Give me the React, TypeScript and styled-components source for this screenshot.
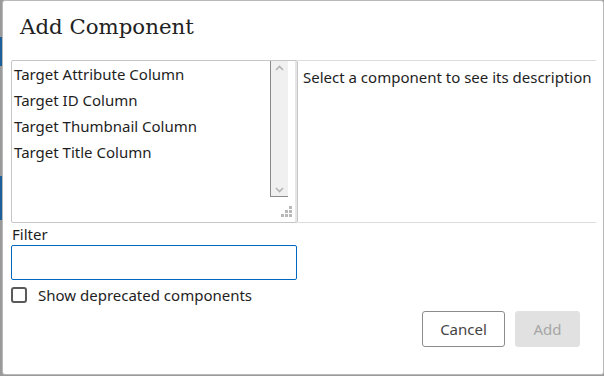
import React, { useState } from 'react';
import styled, { createGlobalStyle } from 'styled-components';

const uiFont = `'Noto Sans', 'Open Sans', Arial, sans-serif`;

const GlobalStyle = createGlobalStyle`
  html, body {
    margin: 0;
    padding: 0;
    width: 604px;
    height: 376px;
    overflow: hidden;
  }
  body {
    font-family: ${uiFont};
    background: #ffffff;
  }
`;

const Backdrop = styled.div`
  display: flex;
  width: 604px;
  height: 376px;
  box-sizing: border-box;
  padding-left: 2px;
  background: linear-gradient(
    to bottom,
    #9a9a9a 0,
    #9a9a9a 37px,
    #1d5f99 37px,
    #1d5f99 66px,
    #9a9a9a 66px,
    #9a9a9a 176px,
    #1d5f99 176px,
    #1d5f99 220px,
    #9a9a9a 220px
  );
`;

const Dialog = styled.div`
  display: flex;
  flex-direction: column;
  flex: 1;
  height: 375px;
  box-sizing: border-box;
  background: #ffffff;
  border: 1px solid #b9b9b9;
  border-radius: 3px;
`;

const Title = styled.h1`
  margin: 0;
  padding: 11px 0 0 17px;
  height: 59px;
  box-sizing: border-box;
  font-family: 'DejaVu Serif', 'Liberation Serif', serif;
  font-weight: 400;
  font-size: 21.3px;
  line-height: 30px;
  color: #222222;
`;

const Body = styled.div`
  display: flex;
  height: 163px;
  margin: 0 7px 0 8px;
`;

const ListBox = styled.div`
  display: flex;
  width: 287px;
  box-sizing: border-box;
  border: 1px solid #c6c6c6;
  border-radius: 2px;
  position: relative;
`;

const Items = styled.ul`
  flex: 1;
  margin: 0;
  padding: 0 0 0 2px;
  list-style: none;
`;

const Item = styled.li<{ selected?: boolean }>`
  height: 26px;
  line-height: 26px;
  font-size: 15px;
  color: #1e1e1e;
  white-space: nowrap;
  background: ${({ selected }) => (selected ? '#cce4f7' : 'transparent')};
`;

const ScrollColumn = styled.div`
  display: flex;
  width: 27px;
  border-right: 2px solid #e6e6e6;
  box-sizing: border-box;
`;

const ScrollTrack = styled.div`
  display: flex;
  flex-direction: column;
  justify-content: space-between;
  align-items: center;
  width: 18px;
  height: 136px;
  box-sizing: border-box;
  background: #f0f0f0;
  border-left: 1px solid #8a8a8a;
  border-bottom: 1px solid #8a8a8a;
  padding: 4px 0 3px;
`;

const ResizeGrip = styled.svg`
  position: absolute;
  right: 4px;
  bottom: 4px;
`;

const Description = styled.div`
  flex: 1;
  box-sizing: border-box;
  border-top: 1px solid #dcdcdc;
  border-bottom: 1px solid #dcdcdc;
  padding: 4px 0 0 5px;
  font-size: 15px;
  line-height: 24px;
  color: #1e1e1e;
  white-space: nowrap;
  overflow: hidden;
`;

const FilterArea = styled.div`
  display: flex;
  flex-direction: column;
  width: 286px;
  margin: 0 0 0 8px;
`;

const Label = styled.label`
  font-size: 15px;
  line-height: 22px;
  color: #1e1e1e;
  padding-left: 1px;
`;

const Input = styled.input`
  height: 35px;
  box-sizing: border-box;
  border: 1px solid #0067c0;
  border-radius: 2px;
  outline: none;
  font-family: ${uiFont};
  font-size: 15px;
  padding: 0 6px;
`;

const CheckRow = styled.label`
  display: flex;
  align-items: center;
  gap: 11px;
  margin-top: 5px;
  font-size: 15px;
  line-height: 20px;
  color: #1e1e1e;
  cursor: pointer;
`;

const Box = styled.span<{ checked: boolean }>`
  width: 16px;
  height: 16px;
  box-sizing: border-box;
  border: 2px solid #5a5a5a;
  border-radius: 3px;
  background: ${({ checked }) => (checked ? '#0067c0' : '#fff')};
`;

const Footer = styled.div`
  display: flex;
  justify-content: flex-end;
  gap: 10px;
  margin: 6px 23px 0 0;
`;

const Button = styled.button<{ primary?: boolean }>`
  height: 36px;
  min-width: ${({ primary }) => (primary ? '65px' : '83px')};
  box-sizing: border-box;
  padding: 0 16px;
  font-family: ${uiFont};
  font-size: 15px;
  border-radius: 3px;
  border: 1px solid ${({ primary }) => (primary ? '#e1e1e1' : '#8c8c8c')};
  background: ${({ primary }) => (primary ? '#e1e1e1' : '#ffffff')};
  color: ${({ primary }) => (primary ? '#a6a6a6' : '#444444')};
`;

const components = [
  'Target Attribute Column',
  'Target ID Column',
  'Target Thumbnail Column',
  'Target Title Column',
];

export default function App() {
  const [showDeprecated, setShowDeprecated] = useState(false);
  const [filter, setFilter] = useState('');

  return (
    <>
      <GlobalStyle />
      <Backdrop>
        <Dialog>
          <Title>Add Component</Title>
          <Body>
            <ListBox>
              <Items>
                {components.map(name => (
                  <Item key={name}>{name}</Item>
                ))}
              </Items>
              <ScrollColumn>
                <ScrollTrack>
                  <svg width="9" height="6" viewBox="0 0 9 6">
                    <path d="M1 5 L4.5 1.5 L8 5" fill="none" stroke="#b4b4b4" strokeWidth="1.6" />
                  </svg>
                  <svg width="9" height="6" viewBox="0 0 9 6">
                    <path d="M1 1 L4.5 4.5 L8 1" fill="none" stroke="#b4b4b4" strokeWidth="1.6" />
                  </svg>
                </ScrollTrack>
              </ScrollColumn>
              <ResizeGrip width="12" height="12" viewBox="0 0 12 12">
                <rect x="8" y="0" width="3" height="3" fill="#b8b8b8" />
                <rect x="4" y="4" width="3" height="3" fill="#b8b8b8" />
                <rect x="8" y="4" width="3" height="3" fill="#b8b8b8" />
                <rect x="0" y="8" width="3" height="3" fill="#b8b8b8" />
                <rect x="4" y="8" width="3" height="3" fill="#b8b8b8" />
                <rect x="8" y="8" width="3" height="3" fill="#b8b8b8" />
              </ResizeGrip>
            </ListBox>
            <Description>Select a component to see its description</Description>
          </Body>
          <FilterArea>
            <Label htmlFor="filter">Filter</Label>
            <Input id="filter" value={filter} onChange={e => setFilter(e.target.value)} />
            <CheckRow onClick={() => setShowDeprecated(v => !v)}>
              <Box checked={showDeprecated} />
              Show deprecated components
            </CheckRow>
          </FilterArea>
          <Footer>
            <Button type="button">Cancel</Button>
            <Button type="button" primary disabled>
              Add
            </Button>
          </Footer>
        </Dialog>
      </Backdrop>
    </>
  );
}
